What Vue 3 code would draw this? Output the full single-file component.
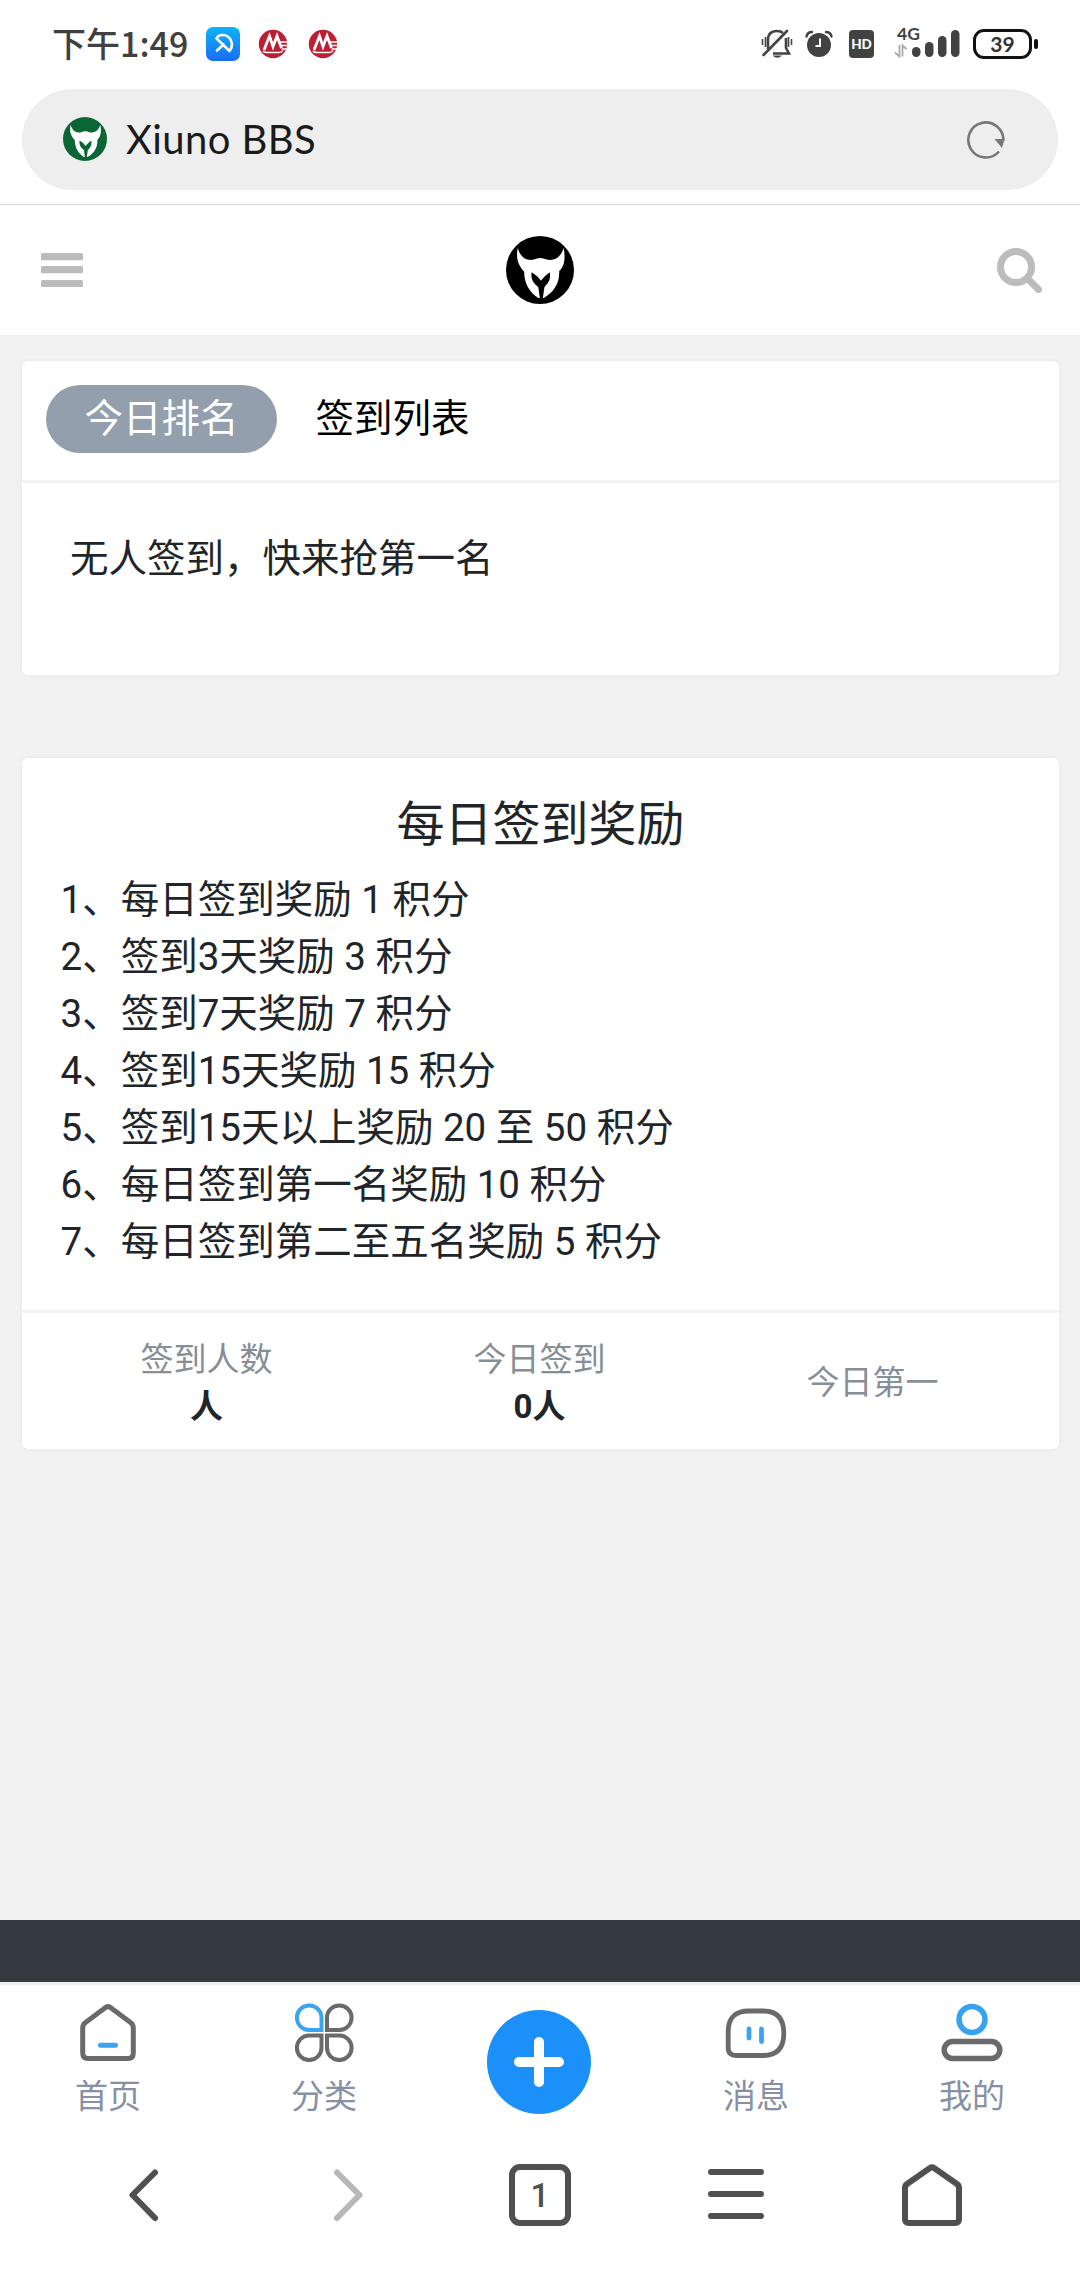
<script setup>
import { ref } from 'vue';

const activeTab = ref(0);
const tabs = ['今日排名', '签到列表'];

const rules = [
  '每日签到奖励 1 积分',
  '签到3天奖励 3 积分',
  '签到7天奖励 7 积分',
  '签到15天奖励 15 积分',
  '签到15天以上奖励 20 至 50 积分',
  '每日签到第一名奖励 10 积分',
  '每日签到第二至五名奖励 5 积分',
];

const stats = [
  { label: '签到人数', value: '人' },
  { label: '今日签到', value: '0人' },
  { label: '今日第一', value: '' },
];
</script>

<template>
  <div class="screen">
    <header class="status">
      <span class="time">下午1:49</span>
      <svg class="app" width="34" height="34" viewBox="0 0 34 34">
        <defs>
          <linearGradient id="blue" x1="0" y1="0" x2="0" y2="1">
            <stop offset="0" stop-color="#0cb4fb" />
            <stop offset="1" stop-color="#1a6cf3" />
          </linearGradient>
        </defs>
        <rect width="34" height="34" rx="7" fill="url(#blue)" />
        <path d="M10.500 11.500 C13 6.500 21 7 24.500 12.500 C26.500 16.500 26 21 23.500 24 Z M17.500 17.500 L11 23.500" fill="none" stroke="#fff" stroke-width="2.600" stroke-linecap="round" stroke-linejoin="round" />
      </svg>
      <svg v-for="n in 2" :key="n" class="bank" width="30" height="30" viewBox="0 0 30 30">
        <circle cx="15" cy="15" r="14.200" fill="#bd1e31" />
        <path d="M6 21 L11.500 7 L15 17.500 L19 7 L23.500 19" fill="none" stroke="#fff" stroke-width="2.800" />
        <path d="M5 22 Q6 23.500 9 23.500 H21 Q24 23.500 25 21.500" fill="none" stroke="#fff" stroke-width="1.600" />
        <path d="M21.500 13 H30 M22.500 16.500 H30 M23.500 20 H29" stroke="#fff" stroke-width="1.300" />
      </svg>
      <span class="grow"></span>
      <svg class="bell" width="32" height="30" viewBox="0 0 32 30">
        <path d="M7 20 V11 Q7 2 16 2 Q20 2 22 4 M25 9 V19 L28 24.500 H12" fill="none" stroke="#444" stroke-width="2.600" />
        <path d="M2.500 26 L26 2" stroke="#444" stroke-width="2.600" stroke-linecap="round" />
        <path d="M1.500 10 V16 M4.500 8 V18 M27.500 8 V18 M30.500 10 V16" stroke="#444" stroke-width="1.600" />
        <path d="M11.500 26.500 H21 Q16.500 31 11.500 26.500 Z" fill="#444" />
      </svg>
      <svg class="alarm" width="28" height="28" viewBox="0 0 28 28">
        <circle cx="14" cy="15" r="12" fill="#424242" />
        <path d="M1.500 6.500 Q2.500 2 7 2 M21 2 Q25.500 2 26.500 6.500" fill="none" stroke="#424242" stroke-width="2.400" stroke-linecap="round" />
        <path d="M15 8.500 V16 H10.500" fill="none" stroke="#fff" stroke-width="2" />
      </svg>
      <span class="hd">HD</span>
      <div class="signal">
        <span class="net">4G</span>
        <svg width="66" height="32" viewBox="0 0 66 32">
          <path d="M5.500 17 V28.500 L1 24.500 M8.500 28.500 V17.500 L12.500 21" fill="none" stroke="#aaa" stroke-width="1.800" />
          <rect x="18" y="19" width="8.500" height="10" rx="4.200" fill="#424242" />
          <rect x="31" y="14" width="8.500" height="15" rx="4.200" fill="#424242" />
          <rect x="44" y="8" width="8.500" height="21" rx="4.200" fill="#424242" />
          <rect x="57" y="2" width="8.500" height="27" rx="4.200" fill="#424242" />
        </svg>
      </div>
      <span class="battery">39</span>
      <span class="cap"></span>
    </header>

    <div class="address">
      <svg class="favicon" viewBox="22 20 202 202">
        <circle cx="123" cy="121" r="101" fill="#0a6634" />
        <path d="M57 56 C64 82 82 96 105 90 C118 84 130 84 143 90 C166 96 186 82 193 56 C200 88 194 112 180 124 C182 160 164 188 134 204 L118 204 C92 188 76 160 76 126 C60 110 50 88 57 56 Z" fill="#fff" />
        <path d="M98 128 C95 152 106 162 118 172 L123 208 H131 L136 172 C150 158 155 148 152 128 C142 136 132 144 126 153 C120 144 110 135 98 128 Z" fill="#0a6634" />
      </svg>
      <span class="site">Xiuno BBS</span>
      <svg class="reload" width="40" height="40" viewBox="0 0 40 40">
        <path d="M33 32.500 A17.500 17.500 0 1 1 37.300 22" fill="none" stroke="#777" stroke-width="2.600" />
        <path d="M28.500 20 H38.500 L36 29 Z" fill="#777" />
      </svg>
    </div>

    <nav class="navbar">
      <svg width="42" height="34" viewBox="0 0 42 34" fill="#bcbcbc">
        <rect width="42" height="7.200" rx="1.500" />
        <rect y="13" width="42" height="7.200" rx="1.500" />
        <rect y="27" width="42" height="7.200" rx="1.500" />
      </svg>
      <svg class="logo" viewBox="22 20 202 202">
        <circle cx="123" cy="121" r="101" />
        <path d="M57 56 C64 82 82 96 105 90 C118 84 130 84 143 90 C166 96 186 82 193 56 C200 88 194 112 180 124 C182 160 164 188 134 204 L118 204 C92 188 76 160 76 126 C60 110 50 88 57 56 Z" fill="#fff" />
        <path d="M98 128 C95 152 106 162 118 172 L123 208 H131 L136 172 C150 158 155 148 152 128 C142 136 132 144 126 153 C120 144 110 135 98 128 Z" />
      </svg>
      <svg width="45" height="45" viewBox="0 0 45 45" fill="none" stroke="#bcbcbc">
        <circle cx="19" cy="19" r="15.500" stroke-width="7" />
        <path d="M31 31 L41.500 41.500" stroke-width="7" stroke-linecap="round" />
      </svg>
    </nav>

    <main>
      <section class="card ranking">
        <div class="tabs">
          <a v-for="(tab, idx) in tabs" :key="tab" :class="{ active: activeTab === idx }" @click="activeTab = idx">{{ tab }}</a>
        </div>
        <p class="empty">无人签到，快来抢第一名</p>
      </section>

      <section class="card rewards">
        <h1>每日签到奖励</h1>
        <div class="rules">
          <div v-for="(rule, idx) in rules" :key="idx">{{ idx + 1 }}、{{ rule }}</div>
        </div>
        <div class="stats">
          <div v-for="stat in stats" :key="stat.label" class="stat">
            <span class="label">{{ stat.label }}</span>
            <b v-if="stat.value">{{ stat.value }}</b>
          </div>
        </div>
      </section>
    </main>

    <footer class="dark"></footer>

    <nav class="tabbar">
      <a>
        <svg width="60" height="60" viewBox="0 0 60 60" fill="none" stroke-width="5">
          <path d="M27.500 5.500 Q30 3.800 32.500 5.500 L52.500 20.500 Q55.300 22.500 55.300 26 V51 Q55.300 56.500 50 56.500 H10 Q4.700 56.500 4.700 51 V26 Q4.700 22.500 7.500 20.500 Z" stroke="#6a6a6a" />
          <path d="M22.500 43.300 H37.500" stroke="#3aa4ee" stroke-linecap="round" />
        </svg>
        <span>首页</span>
      </a>
      <a>
        <svg width="60" height="60" viewBox="0 0 60 60" fill="none" stroke="#6a6a6a" stroke-width="4">
          <path d="M27.500 28 H15 A12.300 12.300 0 1 1 27.500 15.500 Z" stroke="#3aa4ee" />
          <path d="M33 28 V15.500 A12.300 12.300 0 1 1 45.500 28 Z" />
          <path d="M27.500 33.500 V46 A12.300 12.300 0 1 1 15 33.500 Z" />
          <path d="M33 33.500 H45.500 A12.300 12.300 0 1 1 33 46 Z" />
        </svg>
        <span>分类</span>
      </a>
      <a class="post">
        <svg width="104" height="104" viewBox="0 0 104 104">
          <circle cx="52" cy="52" r="52" fill="#1a90f8" />
          <path d="M52 32 V72 M32 52 H72" stroke="#fff" stroke-width="10" stroke-linecap="round" />
        </svg>
      </a>
      <a>
        <svg width="62" height="60" viewBox="0 0 62 60" fill="none" stroke-width="4.800">
          <path d="M3.200 46 V29.500 Q3.200 9 24 9 H38.500 Q58.800 9 58.800 31 Q58.800 53.500 38.500 53.500 H11 Q3.200 53.500 3.200 46 Z" stroke="#6a6a6a" />
          <path d="M24 27 V36 M36.500 27 V39.500" stroke="#3aa4ee" stroke-linecap="round" />
        </svg>
        <span>消息</span>
      </a>
      <a>
        <svg width="62" height="60" viewBox="0 0 62 60" fill="none" stroke-width="5.500">
          <circle cx="31" cy="17.500" r="13" stroke="#36a3f1" />
          <rect x="3.200" y="39.500" width="55.600" height="17" rx="8.500" stroke="#6a6a6a" />
        </svg>
        <span>我的</span>
      </a>
    </nav>

    <nav class="browser">
      <a>
        <svg width="62" height="62" viewBox="0 0 62 62"><path d="M38 8.500 L15.500 31 L38 54" /></svg>
      </a>
      <a>
        <svg class="off" width="62" height="62" viewBox="0 0 62 62"><path d="M24 8.500 L46.500 31 L24 54" /></svg>
      </a>
      <a><span class="pages">1</span></a>
      <a>
        <svg width="62" height="62" viewBox="0 0 62 62"><path d="M6 8 H56 M6 30 H56 M6 52 H56" /></svg>
      </a>
      <a>
        <svg width="62" height="62" viewBox="0 0 62 62"><path d="M29 4 Q31 2.500 33 4 L56 20 Q58 21.500 58 24 V55 Q58 59 54 59 H8 Q4 59 4 55 V24 Q4 21.500 6 20 Z" /></svg>
      </a>
    </nav>
  </div>
</template>

<style>
body {
  margin: 0;
  background: #fff;
}
</style>

<style scoped>
.screen {
  width: 1080px;
  height: 2280px;
  display: flex;
  flex-direction: column;
  overflow: hidden;
  background: #fff;
  color: #212529;
  font-family: Roboto, "Noto Sans CJK SC", sans-serif;
  font-size: 38.5px;
}
svg {
  display: block;
  flex: none;
}
.status {
  height: 89px;
  box-sizing: border-box;
  padding: 0 42px 1px 52px;
  display: flex;
  align-items: center;
}
.time {
  width: 154px;
  padding-bottom: 3px;
  color: #404040;
  font-family: "Noto Sans CJK SC", sans-serif;
  font-size: 34px;
  font-weight: 500;
  white-space: nowrap;
}
.bank {
  margin-left: 18px;
}
.bank + .bank {
  margin-left: 20px;
}
.grow {
  flex: 1;
}
.alarm {
  margin-left: 12px;
}
.hd {
  width: 25px;
  height: 28px;
  margin-left: 16px;
  border-radius: 4px;
  background: #424242;
  color: #fff;
  font: 900 13.5px/28px Lato, sans-serif;
  text-align: center;
}
.signal {
  position: relative;
  margin: 0 13px 0 20px;
}
.net {
  position: absolute;
  left: 3px;
  top: -4px;
  color: #424242;
  font: 700 17.5px/20px Lato, sans-serif;
}
.battery {
  width: 59px;
  height: 30px;
  box-sizing: border-box;
  border: 3px solid #111;
  border-radius: 11px;
  color: #333;
  font: 700 21px/23px Lato, sans-serif;
  text-align: center;
}
.cap {
  width: 4px;
  height: 10px;
  margin-left: 2px;
  border-radius: 2px;
  background: #111;
}
.address {
  height: 101px;
  margin: 0 22px 14px;
  box-sizing: border-box;
  padding: 0 52px 2px 41px;
  border-radius: 51px;
  background: #eee;
  display: flex;
  align-items: center;
}
.favicon {
  width: 44px;
  height: 44px;
}
.site {
  flex: 1;
  margin-left: 19px;
  color: #1b1b1b;
  font-family: Lato, sans-serif;
  font-size: 40px;
  letter-spacing: 0.4px;
}
.navbar {
  height: 131px;
  box-sizing: border-box;
  border-top: 1px solid #d8d8d8;
  padding: 0 38px 0 41px;
  display: flex;
  align-items: center;
  justify-content: space-between;
}
.logo {
  width: 68px;
  height: 68px;
}
main {
  height: 1585px;
  box-sizing: border-box;
  padding: 26px 21px 0 22px;
  background: #f1f1f1;
}
.card {
  border-radius: 6px;
  background: #fff;
  box-shadow: 0 0 0 2px #ededed;
}
.ranking {
  height: 314px;
  margin-bottom: 83px;
}
.tabs {
  height: 122px;
  box-sizing: border-box;
  padding: 24px;
  border-bottom: 3px solid #f4f4f6;
  display: flex;
}
.tabs a {
  height: 68px;
  padding: 0 38.5px;
  border-radius: 34px;
  color: #000;
  line-height: 67px;
}
.tabs .active {
  background: #939fac;
  color: #fff;
}
.empty {
  margin: 0;
  padding: 47px 48px;
  line-height: 58px;
}
.rewards {
  height: 691px;
  display: flex;
  flex-direction: column;
}
h1 {
  margin: 0;
  padding-top: 38px;
  font-size: 48px;
  font-weight: 400;
  line-height: 58px;
  text-align: center;
}
.rules {
  flex: 1;
  padding: 17px 38.5px 0;
  line-height: 57px;
}
.stats {
  height: 139px;
  box-sizing: border-box;
  padding: 3px 20px 0 18px;
  border-top: 3px solid #f4f4f4;
  display: grid;
  grid-template-columns: repeat(3, 1fr);
}
.stat {
  display: flex;
  flex-direction: column;
  align-items: center;
  justify-content: center;
  font-size: 33px;
  line-height: 47px;
}
.label {
  color: #868e96;
}
.dark {
  height: 62px;
  background: #343a40;
}
.tabbar {
  height: 158px;
  box-sizing: border-box;
  border-top: 3px solid #eee;
  display: grid;
  grid-template-columns: repeat(5, 216px);
}
.tabbar a {
  padding-top: 17px;
  display: flex;
  flex-direction: column;
  align-items: center;
  color: #8790a5;
  font-size: 33px;
  line-height: 48px;
}
.tabbar span {
  margin-top: 11px;
}
.tabbar .post {
  padding: 25px 2px 0 0;
}
.browser {
  padding: 24px 50px 0;
  display: grid;
  grid-template-columns: repeat(5, 196px);
  justify-items: center;
}
.browser path {
  fill: none;
  stroke: #505050;
  stroke-width: 6;
  stroke-linecap: round;
  stroke-linejoin: round;
}
.browser .off path {
  stroke: #b8b8b8;
}
.pages {
  display: block;
  width: 62px;
  height: 62px;
  box-sizing: border-box;
  border: 6px solid #505050;
  border-radius: 11px;
  color: #505050;
  font: 500 33px/51px Roboto, sans-serif;
  text-align: center;
}
</style>
